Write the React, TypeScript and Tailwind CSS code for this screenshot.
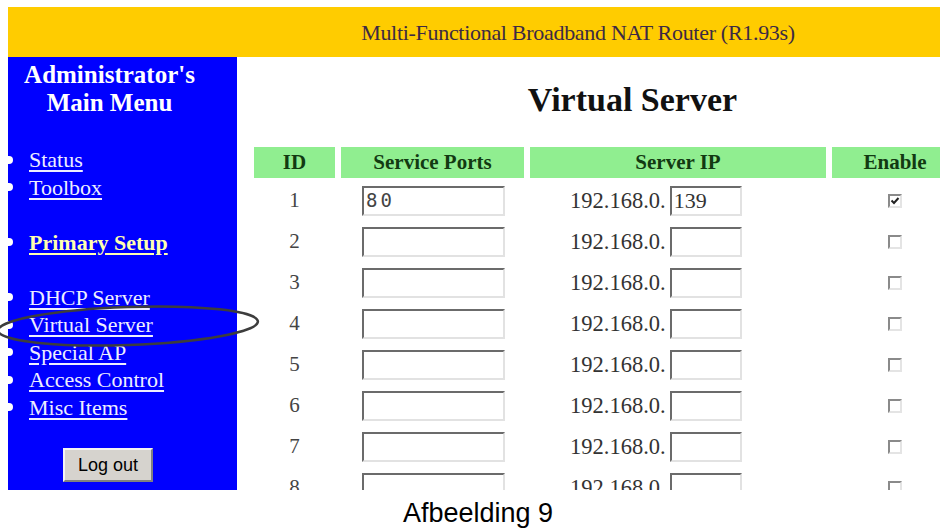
import React from "react";

const links = [
  { label: "Status" },
  { label: "Toolbox" },
  { label: "", gap: true },
  { label: "Primary Setup", bold: true },
  { label: "", gap: true },
  { label: "DHCP Server" },
  { label: "Virtual Server" },
  { label: "Special AP" },
  { label: "Access Control" },
  { label: "Misc Items" },
];

const rows = [
  { id: 1, port: "80", ip: "139", on: true },
  { id: 2, port: "", ip: "", on: false },
  { id: 3, port: "", ip: "", on: false },
  { id: 4, port: "", ip: "", on: false },
  { id: 5, port: "", ip: "", on: false },
  { id: 6, port: "", ip: "", on: false },
  { id: 7, port: "", ip: "", on: false },
  { id: 8, port: "", ip: "", on: false },
];

const serif = "font-['Liberation_Serif','Times_New_Roman',serif]";

const Box: React.FC<{ w: string; children?: React.ReactNode }> = ({ w, children }) => (
  <div
    className={`${w} h-[30px] bg-white border-2 border-t-[#6b6b6b] border-l-[#6b6b6b] border-b-[#e2e2e2] border-r-[#e2e2e2] flex items-center pl-[2px] overflow-hidden`}
  >
    {children}
  </div>
);

const Check: React.FC<{ on: boolean }> = ({ on }) => (
  <span className="w-[14px] h-[14px] bg-white border-2 border-t-[#8a8a8a] border-l-[#8a8a8a] border-b-[#e4e4e4] border-r-[#e4e4e4] flex items-center justify-center">
    {on && (
      <svg width="10" height="10" viewBox="0 0 10 10">
        <path d="M1.5 4.5 L4 7 L8.5 2" fill="none" stroke="#222" strokeWidth="2" />
      </svg>
    )}
  </span>
);

export default function App() {
  return (
    <div className={`w-[948px] h-[528px] bg-white relative overflow-hidden ${serif}`}>
      <div className="pt-[7px] pl-[8px]">
        <div className="w-[932px] h-[483px] overflow-hidden flex flex-col">
          <div className="h-[50px] shrink-0 bg-[#ffcc00] flex items-center justify-center pl-[208px] text-[22px] tracking-[-0.3px] text-[#3c2a44]">
            Multi-Functional Broadband NAT Router (R1.93s)
          </div>
          <div className="flex flex-1 min-h-0">
            <aside className="w-[229px] shrink-0 bg-[#0000ff] text-white">
              <div className="pt-[4px] pr-[26px] text-center font-bold text-[25px] leading-[28px]">
                <div>Administrator's</div>
                <div>Main Menu</div>
              </div>
              <ul className="mt-[29px] text-[22px] leading-[27.5px]">
                {links.map((l, i) =>
                  l.gap ? (
                    <li key={i} className="h-[27.5px]" />
                  ) : (
                    <li key={i} className="flex items-center h-[27.5px]">
                      <span className="w-[5px] h-[8px] rounded-r-full bg-white shrink-0" />
                      <span
                        className={`ml-[16px] underline underline-offset-[3px] ${
                          l.bold ? "font-bold text-[#ffffb0]" : "text-[#eeeeff]"
                        }`}
                      >
                        {l.label}
                      </span>
                    </li>
                  )
                )}
              </ul>
              <button className="mt-[27px] ml-[55px] w-[90px] h-[34px] bg-[#d6d3ce] border-2 border-t-[#f4f4f4] border-l-[#f4f4f4] border-b-[#808080] border-r-[#808080] font-['Liberation_Sans',Arial,sans-serif] text-[18px] text-black">
                Log out
              </button>
            </aside>
            <main className="flex-1 min-w-0">
              <h1 className="pt-[23px] pl-[88px] text-center font-bold text-[34px] leading-[40px] text-[#111]">
                Virtual Server
              </h1>
              <div className="mt-[27px] ml-[17px] grid grid-cols-[81px_183px_296px_126px] gap-x-[6px] text-[#333]">
                {["ID", "Service Ports", "Server IP", "Enable"].map((h) => (
                  <div
                    key={h}
                    className="h-[31px] bg-[#90ee90] flex items-center justify-center font-bold text-[21px] text-[#123a12]"
                  >
                    {h}
                  </div>
                ))}
                <div className="col-span-4 h-[2px]" />
                {rows.map((r) => (
                  <React.Fragment key={r.id}>
                    <div className="h-[41px] flex items-center justify-center text-[21px] text-[#444]">{r.id}</div>
                    <div className="h-[41px] flex items-center pl-[21px]">
                      <Box w="w-[143px]">
                        <span className="font-['DejaVu_Sans_Mono',monospace] text-[19px] tracking-[3px] text-[#444]">
                          {r.port}
                        </span>
                      </Box>
                    </div>
                    <div className="h-[41px] flex items-center pl-[40px] text-[22.5px]">
                      <span className="mr-[4px]">192.168.0.</span>
                      <Box w="w-[72px]">
                        <span className="text-[22px] text-[#333]">{r.ip}</span>
                      </Box>
                    </div>
                    <div className="h-[41px] flex items-center justify-center">
                      <Check on={r.on} />
                    </div>
                  </React.Fragment>
                ))}
              </div>
            </main>
          </div>
        </div>
      </div>
      <div className="mt-[10px] pl-[403px] font-['Liberation_Sans',Arial,sans-serif] text-[27px] leading-[26px] text-black">
        Afbeelding 9
      </div>
      <svg className="absolute left-0 top-0 pointer-events-none" width="948" height="528">
        <ellipse
          cx="128"
          cy="326"
          rx="130"
          ry="19"
          transform="rotate(-2 128 326)"
          fill="none"
          stroke="#3d3d3d"
          strokeWidth="2.5"
        />
      </svg>
    </div>
  );
}
